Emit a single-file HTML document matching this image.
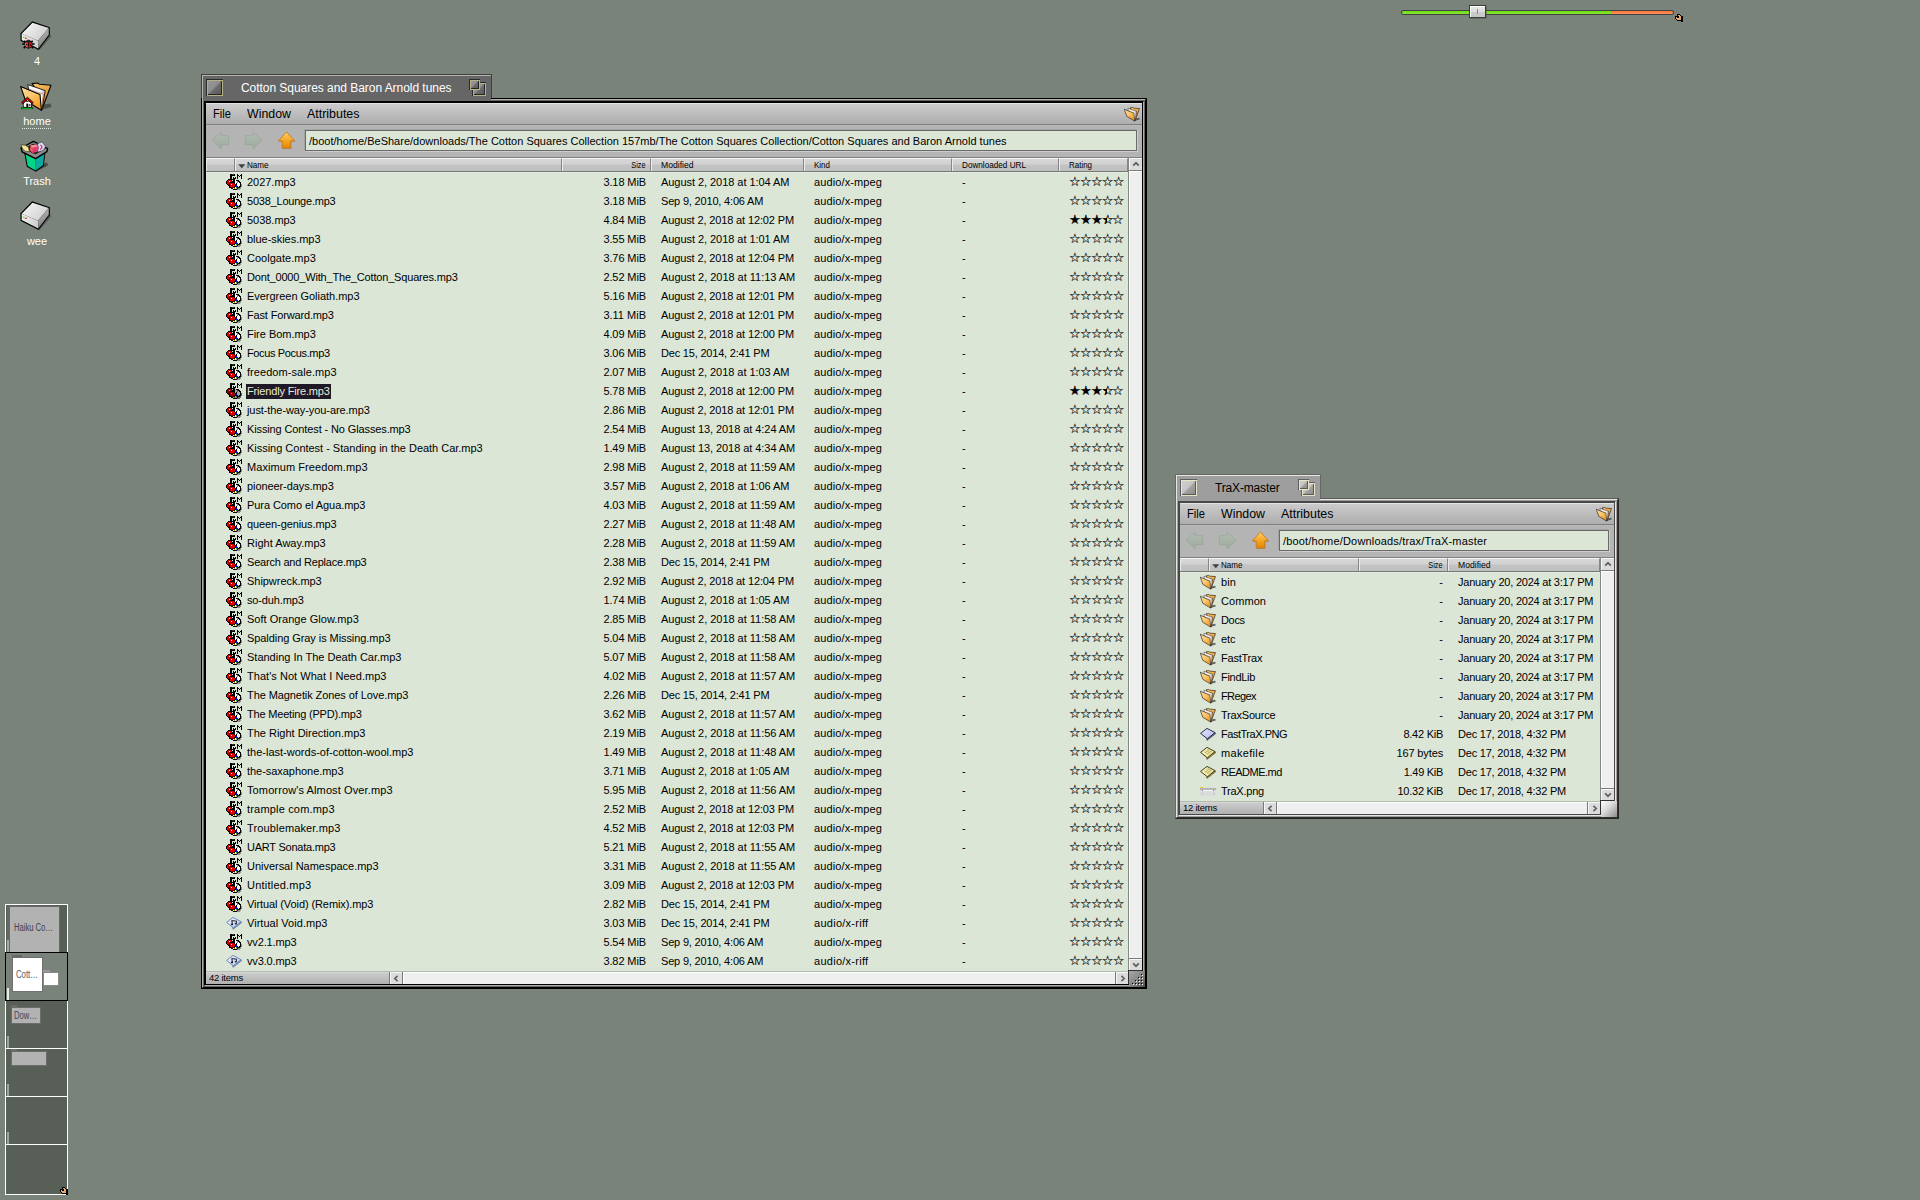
<!DOCTYPE html>
<html lang="en"><head><meta charset="utf-8"><title>Haiku Desktop</title>
<style>
html,body{margin:0;padding:0}
body{width:1920px;height:1200px;overflow:hidden;background:#79837a;position:relative;font-family:"Liberation Sans",sans-serif;font-size:11px;color:#000;line-height:1}
div,span,svg,i{position:absolute;box-sizing:border-box}
span.f{position:static;white-space:pre}
.t{white-space:pre;line-height:13px;height:13px}
.lbl{color:#fff;font-size:11px;text-align:center;width:80px;white-space:pre;line-height:13px}
.ring{left:0;top:0;right:0;bottom:0;border:1px solid #000}
.mb{left:0;top:0;right:0;height:22px;background:linear-gradient(#cbcbcb,#aeaeae);border-top:1px solid #e3e3e3;border-bottom:1px solid #7e7e7e}
.mi{font-size:12px;top:3px;line-height:14px;white-space:pre}
.nav{left:0;top:22px;right:0;height:32px;background:#b4b4b4;border-top:1px solid #b9b9b9}
.tf{background:#dbe6d7;border:1px solid #6a6a6a;box-shadow:-1px -1px 0 #a4a4a4,1px 1px 0 #cdcdcd,-1px 1px 0 #b8b8b8,1px -1px 0 #b8b8b8}
.hdr{left:0;top:54px;height:15px;background:linear-gradient(#d8d8d8 0,#d2d2d2 46%,#c3c3c3 54%,#bfbfbf 100%);border-top:1px solid #808080;border-bottom:1px solid #787878}
.hc{top:0;height:13px;border-top:1px solid #f6f6f6;border-left:1px solid #ececec;border-right:1px solid #868686;font-size:9.5px;line-height:12px;white-space:pre}
.hc span.f{position:absolute;top:0}
.list{left:0;top:69px;background:#dbe6d7;border-top:1px solid #e5eddf}
.row{left:0;height:19px;right:0}
.row .t{top:3px}
.st{font-family:"DejaVu Sans",sans-serif;font-size:13px;line-height:13px;top:2px;white-space:pre;letter-spacing:-0.7px;-webkit-text-stroke:0.22px currentColor}
.sb{background:#efefef}
.btn{background:#dcdcdc;border-top:1px solid #f8f8f8;border-left:1px solid #f8f8f8}
.hand{width:8px;height:8px;overflow:hidden}.hand i{position:absolute;left:-1px;top:-1px;width:1px;height:1px;box-shadow:3px 1px #000,4px 1px #000,5px 1px #000,3px 2px #000,4px 2px #e8aa6c,5px 2px #e8aa6c,6px 2px #000,1px 3px #000,2px 3px #000,3px 3px #000,4px 3px #000,5px 3px #e8aa6c,6px 3px #e8aa6c,7px 3px #000,8px 3px #000,1px 4px #000,2px 4px #e8aa6c,3px 4px #000,4px 4px #000,5px 4px #e8aa6c,6px 4px #e8aa6c,7px 4px #000,8px 4px #000,1px 5px #000,2px 5px #e8aa6c,3px 5px #e8aa6c,4px 5px #e8aa6c,5px 5px #e8aa6c,6px 5px #e8aa6c,7px 5px #000,8px 5px #000,2px 6px #000,3px 6px #e8aa6c,4px 6px #e8aa6c,5px 6px #e8aa6c,6px 6px #e8aa6c,7px 6px #000,8px 6px #000,3px 7px #000,4px 7px #000,5px 7px #000,6px 7px #000,7px 7px #000,8px 7px #000,7px 8px #000,8px 8px #000}.mp3{width:16px;height:16px;overflow:hidden}.mp3 i{position:absolute;left:-1px;top:-1px;width:1px;height:1px;box-shadow:5px 1px #000,6px 1px #000,7px 1px #3a3a3a,8px 1px #3a3a3a,9px 1px #000,12px 1px #000,16px 1px #000,5px 2px #000,6px 2px #000,7px 2px #000,8px 2px #000,9px 2px #000,12px 2px #000,13px 2px #000,15px 2px #000,16px 2px #000,5px 3px #000,6px 3px #000,12px 3px #000,14px 3px #000,16px 3px #000,5px 4px #000,6px 4px #000,8px 4px #000,10px 4px #000,12px 4px #000,16px 4px #000,5px 5px #000,6px 5px #000,8px 5px #000,9px 5px #000,10px 5px #000,12px 5px #000,16px 5px #000,3px 6px #000,4px 6px #000,5px 6px #000,6px 6px #000,7px 6px #000,8px 6px #000,9px 6px #000,2px 7px #000,3px 7px #dc0000,4px 7px #dc0000,5px 7px #dc0000,6px 7px #000,7px 7px #fff,8px 7px #000,9px 7px #000,10px 7px #fff,11px 7px #000,12px 7px #000,13px 7px #000,1px 8px #000,2px 8px #dc0000,3px 8px #dc0000,4px 8px #fff,5px 8px #dc0000,6px 8px #dc0000,7px 8px #000,8px 8px #000,9px 8px #000,10px 8px #fff,11px 8px #fff,12px 8px #e040e8,13px 8px #000,14px 8px #000,1px 9px #000,2px 9px #dc0000,3px 9px #dc0000,4px 9px #dc0000,5px 9px #000,6px 9px #000,7px 9px #000,8px 9px #000,9px 9px #000,10px 9px #fff,11px 9px #e8e8e8,12px 9px #e040e8,13px 9px #fff,14px 9px #000,15px 9px #000,1px 10px #000,2px 10px #dc0000,3px 10px #dc0000,4px 10px #000,5px 10px #dc0000,6px 10px #dc0000,7px 10px #dc0000,8px 10px #dc0000,9px 10px #000,10px 10px #fff,11px 10px #000,12px 10px #fff,13px 10px #fff,14px 10px #fff,15px 10px #000,2px 11px #000,3px 11px #8c0000,4px 11px #000,5px 11px #dc0000,6px 11px #fff,7px 11px #dc0000,8px 11px #dc0000,9px 11px #dc0000,10px 11px #000,11px 11px #000,12px 11px #fff,13px 11px #fff,14px 11px #fff,15px 11px #000,16px 11px #8a9088,3px 12px #000,4px 12px #000,5px 12px #dc0000,6px 12px #dc0000,7px 12px #dc0000,8px 12px #dc0000,9px 12px #dc0000,10px 12px #000,11px 12px #0000e0,12px 12px #fff,13px 12px #fff,14px 12px #fff,15px 12px #000,16px 12px #8a9088,4px 13px #000,5px 13px #dc0000,6px 13px #dc0000,7px 13px #dc0000,8px 13px #dc0000,9px 13px #8c0000,10px 13px #000,11px 13px #0000e0,12px 13px #0000e0,13px 13px #e8e8e8,14px 13px #000,15px 13px #000,16px 13px #8a9088,4px 14px #000,5px 14px #000,6px 14px #8c0000,7px 14px #8c0000,8px 14px #8c0000,9px 14px #000,10px 14px #fff,11px 14px #00c000,12px 14px #0000e0,13px 14px #000,14px 14px #000,15px 14px #8a9088,6px 15px #000,7px 15px #000,8px 15px #fff,9px 15px #b0a000,10px 15px #fff,11px 15px #c080c8,12px 15px #000,13px 15px #8a9088,14px 15px #8a9088,15px 15px #8a9088,8px 16px #000,9px 16px #000,10px 16px #000,11px 16px #000,12px 16px #8a9088,13px 16px #8a9088,14px 16px #8a9088}.mp3s{width:16px;height:16px;overflow:hidden}.mp3s i{position:absolute;left:-1px;top:-1px;width:1px;height:1px;box-shadow:5px 1px #000,6px 1px #000,7px 1px #222,8px 1px #222,9px 1px #000,12px 1px #000,16px 1px #000,5px 2px #000,6px 2px #000,7px 2px #000,8px 2px #000,9px 2px #000,12px 2px #000,13px 2px #000,15px 2px #000,16px 2px #000,5px 3px #000,6px 3px #000,12px 3px #000,14px 3px #000,16px 3px #000,5px 4px #000,6px 4px #000,8px 4px #000,10px 4px #000,12px 4px #000,16px 4px #000,5px 5px #000,6px 5px #000,8px 5px #000,9px 5px #000,10px 5px #000,12px 5px #000,16px 5px #000,3px 6px #000,4px 6px #000,5px 6px #000,6px 6px #000,7px 6px #000,8px 6px #000,9px 6px #000,2px 7px #000,3px 7px #980000,4px 7px #980000,5px 7px #980000,6px 7px #000,7px 7px #a8a8a8,8px 7px #000,9px 7px #000,10px 7px #a8a8a8,11px 7px #000,12px 7px #000,13px 7px #000,1px 8px #000,2px 8px #980000,3px 8px #980000,4px 8px #a8a8a8,5px 8px #980000,6px 8px #980000,7px 8px #000,8px 8px #000,9px 8px #000,10px 8px #a8a8a8,11px 8px #a8a8a8,12px 8px #9030a0,13px 8px #000,14px 8px #000,1px 9px #000,2px 9px #980000,3px 9px #980000,4px 9px #980000,5px 9px #000,6px 9px #000,7px 9px #000,8px 9px #000,9px 9px #000,10px 9px #a8a8a8,11px 9px #989898,12px 9px #9030a0,13px 9px #a8a8a8,14px 9px #000,15px 9px #000,1px 10px #000,2px 10px #980000,3px 10px #980000,4px 10px #000,5px 10px #980000,6px 10px #980000,7px 10px #980000,8px 10px #980000,9px 10px #000,10px 10px #a8a8a8,11px 10px #000,12px 10px #a8a8a8,13px 10px #a8a8a8,14px 10px #a8a8a8,15px 10px #000,2px 11px #000,3px 11px #5c0000,4px 11px #000,5px 11px #980000,6px 11px #a8a8a8,7px 11px #980000,8px 11px #980000,9px 11px #980000,10px 11px #000,11px 11px #000,12px 11px #a8a8a8,13px 11px #a8a8a8,14px 11px #a8a8a8,15px 11px #000,16px 11px #5a5e58,3px 12px #000,4px 12px #000,5px 12px #980000,6px 12px #980000,7px 12px #980000,8px 12px #980000,9px 12px #980000,10px 12px #000,11px 12px #000098,12px 12px #a8a8a8,13px 12px #a8a8a8,14px 12px #a8a8a8,15px 12px #000,16px 12px #5a5e58,4px 13px #000,5px 13px #980000,6px 13px #980000,7px 13px #980000,8px 13px #980000,9px 13px #5c0000,10px 13px #000,11px 13px #000098,12px 13px #000098,13px 13px #989898,14px 13px #000,15px 13px #000,16px 13px #5a5e58,4px 14px #000,5px 14px #000,6px 14px #5c0000,7px 14px #5c0000,8px 14px #5c0000,9px 14px #000,10px 14px #a8a8a8,11px 14px #008000,12px 14px #000098,13px 14px #000,14px 14px #000,15px 14px #5a5e58,6px 15px #000,7px 15px #000,8px 15px #a8a8a8,9px 15px #756a00,10px 15px #a8a8a8,11px 15px #805088,12px 15px #000,13px 15px #5a5e58,14px 15px #5a5e58,15px 15px #5a5e58,8px 16px #000,9px 16px #000,10px 16px #000,11px 16px #000,12px 16px #5a5e58,13px 16px #5a5e58,14px 16px #5a5e58}</style></head>
<body>
<svg width="0" height="0" style="left:-10px;top:-10px">
<linearGradient id="gFr" x1="0" y1="0" x2="0.6" y2="1"><stop offset="0" stop-color="#fddfa0"/><stop offset="0.5" stop-color="#fbc870"/><stop offset="1" stop-color="#f39a20"/></linearGradient>
<linearGradient id="gBk" x1="0" y1="0" x2="0.3" y2="1"><stop offset="0" stop-color="#fbc768"/><stop offset="1" stop-color="#d87818"/></linearGradient>
<linearGradient id="gPp" x1="0" y1="0" x2="1" y2="0.4"><stop offset="0" stop-color="#fff"/><stop offset="0.7" stop-color="#f4f4f4"/><stop offset="1" stop-color="#b8b8c0"/></linearGradient>
<linearGradient id="gTop" x1="0" y1="0" x2="1" y2="0.6"><stop offset="0" stop-color="#fafafa"/><stop offset="1" stop-color="#cfcfcf"/></linearGradient>
<linearGradient id="gFrt" x1="0" y1="0" x2="1" y2="0.3"><stop offset="0" stop-color="#f4f4f4"/><stop offset="1" stop-color="#d0d0d0"/></linearGradient>
<linearGradient id="gSd" x1="0" y1="0" x2="0.3" y2="1"><stop offset="0" stop-color="#c4c4c4"/><stop offset="1" stop-color="#7c7c7c"/></linearGradient>
<linearGradient id="gUp" x1="0" y1="0" x2="0" y2="1"><stop offset="0" stop-color="#fdd070"/><stop offset="0.5" stop-color="#f6a828"/><stop offset="1" stop-color="#e08800"/></linearGradient>
<linearGradient id="gArr" x1="0" y1="0" x2="0" y2="1"><stop offset="0" stop-color="#b2beb2"/><stop offset="1" stop-color="#9eaa9e"/></linearGradient>
<linearGradient id="gCan" x1="0" y1="0" x2="1" y2="0"><stop offset="0" stop-color="#00d888"/><stop offset="0.5" stop-color="#00d080"/><stop offset="0.52" stop-color="#10b0a0"/><stop offset="1" stop-color="#0a9c98"/></linearGradient>
<linearGradient id="gBlu" x1="0" y1="0" x2="1" y2="1"><stop offset="0" stop-color="#e8e8ff"/><stop offset="1" stop-color="#b4b4ee"/></linearGradient>
<linearGradient id="gYel" x1="0" y1="0" x2="1" y2="1"><stop offset="0" stop-color="#fdf8c0"/><stop offset="1" stop-color="#f0e48c"/></linearGradient>
<linearGradient id="gAud" x1="0" y1="0" x2="1" y2="1"><stop offset="0" stop-color="#f0f4ff"/><stop offset="1" stop-color="#b8c8f0"/></linearGradient>
</svg>
<svg style="left:20px;top:20px" width="32" height="32" viewBox="0 0 32 32"><path d="M19 30.6 L31.4 16.6 L29.8 14 L18 28 Z" fill="#3c423c" opacity="0.55"/> <path d="M12.2 1.2 L29.8 7.2 L29.9 15.1 L18.6 30.1 L0.5 20.7 L0.5 13.2 Z" fill="#000"/> <path d="M12.5 2.7 L28.7 8.1 L18 20.8 L1.7 13.7 Z" fill="url(#gTop)"/> <path d="M1.7 13.7 L18 20.8 L18.3 28.6 L1.7 20 Z" fill="url(#gFrt)"/> <path d="M18 20.8 L28.7 8.1 L28.8 14.7 L18.3 28.6 Z" fill="url(#gSd)"/> <ellipse cx="3.7" cy="17.3" rx="1.1" ry="0.8" fill="#60e020"/> <ellipse cx="5.9" cy="18.3" rx="1.1" ry="0.8" fill="#f03030"/></svg><svg style="left:21.6px;top:39.2px" width="13.4" height="10" viewBox="0 0 14 10"><path d="M0.2 5 H13.2 M1.8 9.4 L4.4 6.6 M11.6 9.4 L9 6.6 M2.2 1.6 L4.2 3.6 M11.2 1.6 L9.2 3.6" stroke="#000" stroke-width="1.7" fill="none"/> <path d="M3.6 2 Q6.7 -1.2 9.8 2 L9.4 3.4 H4 Z" fill="#2c2c2c"/> <path d="M3 3 H6.5 V9.6 Q3.2 9 2.9 5.6 Z" fill="#f24a52" stroke="#000" stroke-width="0.7"/> <path d="M7 3 H10.4 L10.6 5.6 Q10.2 9 7 9.6 Z" fill="#f01a1a" stroke="#000" stroke-width="0.7"/> <circle cx="4.8" cy="5.6" r="0.75" fill="#000"/><circle cx="8.8" cy="6" r="0.75" fill="#000"/> <path d="M3.8 4 V7" stroke="#f8a0a4" stroke-width="0.6"/></svg><div class="lbl" style="left:-3px;top:55px">4</div><svg style="left:20px;top:80px" width="32" height="32" viewBox="0 0 32 32"><path d="M22.5 29.5 L31.5 27 L30.5 23.5 L24 24.5 Z" fill="#3c423c" opacity="0.75"/> <path d="M12 3.6 L17.5 3 L19.5 4.2 L31 5.2 L21.6 30.2 L20 14.5 Z" fill="url(#gBk)" stroke="#000" stroke-width="1.1" stroke-linejoin="round"/> <path d="M7.8 4.6 L25.2 10.6 L22.2 28.5 L9 12 Z" fill="url(#gPp)" stroke="#111" stroke-width="0.9" stroke-linejoin="round"/> <path d="M9.2 9.2 L23.2 14.2 L21.6 28.6 L10 14 Z" fill="#fff" stroke="#a04010" stroke-width="0.5"/> <path d="M0.6 6.4 L20 14.6 L21.4 30.2 L5.5 20.5 Z" fill="url(#gFr)" stroke="#000" stroke-width="1.1" stroke-linejoin="round"/></svg><svg style="left:20.6px;top:96.4px" width="13.4" height="13.4" viewBox="0 0 14 14"><path d="M0.4 11.9 H12.6 V13.7 H0.4 Z" fill="#000"/> <path d="M1.1 12.2 H11.9 V13.3 H1.1 Z" fill="#00f028"/> <path d="M2 6 H11.4 V12 H2 Z" fill="#000"/> <path d="M2.8 6 H10.6 V11.3 H2.8 Z" fill="#fff"/> <path d="M6.7 1.2 L12.8 6.9 L11.6 8.2 L6.7 3.7 L1.8 8.2 L0.6 6.9 Z" fill="#f00000" stroke="#000" stroke-width="0.9" stroke-linejoin="round"/> <path d="M5.6 8 H7.6 V11.4 H5.6 Z" fill="#000"/> <circle cx="9.1" cy="9.3" r="1" fill="#222"/><circle cx="9.3" cy="9.1" r="0.4" fill="#ddd"/></svg><div class="lbl" style="left:-3px;top:115px">home</div><div style="left:22px;top:128px;width:29px;height:1px;background:repeating-linear-gradient(to right,#e4e8e4 0 1px,transparent 1px 2px)"></div><svg style="left:20px;top:140px" width="32" height="32" viewBox="0 0 32 32"><path d="M16 31.6 L28 25.6 L27 22.6 L21 24.4 Z" fill="#363c36" opacity="0.8"/> <path d="M4.2 12.6 L25.4 12.2 L23.8 25.9 L15.7 31.8 L6.8 26.7 Z" fill="#000"/> <path d="M5.4 13.6 L15.6 18.6 L15.6 30.4 L7.7 26 Z" fill="#00d686"/> <path d="M15.6 18.6 L24.4 13.2 L22.9 25.3 L15.6 30.4 Z" fill="#0ea89e"/> <path d="M1 8 L13.5 1.4 L27.6 8.6 L26.9 11.7 L15.6 18.7 L2.3 12 Z" fill="#8e8e8e" stroke="#000" stroke-width="1.4" stroke-linejoin="round"/> <path d="M3.5 8.6 L13.5 3.6 L25 9 L15.4 14.6 Z" fill="#262626"/> <path d="M0.8 4.8 L5.6 5.2 L8.6 7.6 L9.4 11.8 L5.6 11.4 L2.6 8.8 Z" fill="#f4e690" stroke="#222" stroke-width="0.6"/> <path d="M17.6 3.6 L22 1.8 L25.6 6.4 L23.4 10.4 L17.6 12.2 Z" fill="#d4dcf8" stroke="#222" stroke-width="0.6"/> <path d="M20.4 5 Q23.6 6.6 20.2 9.6" fill="none" stroke="#e02860" stroke-width="1.3"/> <path d="M10.2 5.6 L15.8 4.4 L18.4 6.6 L17.6 11.4 L12.4 13 L9.4 10.4 Z" fill="#e85a68" stroke="#300" stroke-width="0.5"/> <path d="M10.2 5.6 L15.8 4.4 L18.4 6.6 L12.8 7.8 Z" fill="#f89098"/> <path d="M18.4 6.6 L17.6 11.4 L12.4 13 L12.8 7.8 Z" fill="#e03a70"/></svg><div class="lbl" style="left:-3px;top:175px">Trash</div><svg style="left:20px;top:200px" width="32" height="32" viewBox="0 0 32 32"><path d="M19 30.6 L31.4 16.6 L29.8 14 L18 28 Z" fill="#3c423c" opacity="0.55"/> <path d="M12.2 1.2 L29.8 7.2 L29.9 15.1 L18.6 30.1 L0.5 20.7 L0.5 13.2 Z" fill="#000"/> <path d="M12.5 2.7 L28.7 8.1 L18 20.8 L1.7 13.7 Z" fill="url(#gTop)"/> <path d="M1.7 13.7 L18 20.8 L18.3 28.6 L1.7 20 Z" fill="url(#gFrt)"/> <path d="M18 20.8 L28.7 8.1 L28.8 14.7 L18.3 28.6 Z" fill="url(#gSd)"/> <ellipse cx="3.7" cy="17.3" rx="1.1" ry="0.8" fill="#60e020"/> <ellipse cx="5.9" cy="18.3" rx="1.1" ry="0.8" fill="#f03030"/></svg><div class="lbl" style="left:-3px;top:235px">wee</div><div style="left:1401px;top:10px;width:273px;height:5px;background:#3e4446;border-radius:2.5px"></div><div style="left:1402px;top:11px;width:209px;height:3px;background:linear-gradient(#72dc12,#84e62c);border-radius:1.5px 0 0 1.5px"></div><div style="left:1611px;top:11px;width:62px;height:3px;background:linear-gradient(#f8743a,#fe9258);border-radius:0 1.5px 1.5px 0"></div><div style="left:1470px;top:6px;width:17px;height:13px;background:#4a5048;opacity:.45"></div><div style="left:1469px;top:5px;width:17px;height:13px;background:linear-gradient(#e6e6e6 0,#dedede 50%,#cccccc 52%,#c8c8c8 100%);border:1px solid #3c3c3c;box-shadow:inset 1px 1px 0 #fff"><div style="left:7px;top:3px;width:1px;height:5px;background:#8a8a8a"></div></div><div class="hand" style="left:1675px;top:14px"><i></i></div><div style="left:5px;top:904px;width:63px;height:291px;background:#fff"></div><div style="left:6px;top:905px;width:61px;height:47px;background:#575f57;overflow:hidden"><div style="left:1px;top:0;width:3px;height:36px;background:#666"></div><div style="left:1px;top:35px;width:2px;height:12px;background:#a8a8a8"></div><div style="left:3px;top:1px;width:51px;height:47px;background:#b2b2b2;border:1px solid #6a6a6a"></div><div style="left:5px;top:0px;width:7px;height:2px;background:#666"></div><div class="t" style="left:8px;top:16px;font-size:10px;color:#3c4050"><span class="f" style="display:inline-block;transform:scaleX(0.7626);transform-origin:0 0">Haiku Co…</span></div></div><div style="left:6px;top:953px;width:61px;height:47px;background:#79837a;overflow:hidden"><div style="left:1px;top:35px;width:2px;height:12px;background:#e8e8e8"></div><div style="left:6px;top:2px;width:10px;height:3px;background:#666"></div><div style="left:6px;top:4px;width:31px;height:35px;background:#fff;border:1px solid #707070"></div><div class="t" style="left:10px;top:15px;font-size:10px;color:#505868"><span class="f" style="display:inline-block;transform:scaleX(0.7762);transform-origin:0 0">Cott…</span></div><div style="left:37px;top:17px;width:7px;height:3px;background:#999"></div><div style="left:37px;top:19px;width:16px;height:14px;background:#fff;border:1px solid #8a8a8a"></div></div><div style="left:5px;top:952px;width:63px;height:49px;border:1px solid #000"></div><div style="left:6px;top:1001px;width:61px;height:47px;background:#575f57;overflow:hidden"><div style="left:1px;top:35px;width:2px;height:12px;background:#a0a4a0"></div><div style="left:5px;top:4px;width:6px;height:3px;background:#6c6c6c"></div><div style="left:5px;top:6px;width:30px;height:17px;background:#b2b2b2;border:1px solid #6a6e6a"></div><div class="t" style="left:8px;top:8px;font-size:10px;color:#404458"><span class="f" style="display:inline-block;transform:scaleX(0.7663);transform-origin:0 0">Dow…</span></div></div><div style="left:6px;top:1049px;width:61px;height:47px;background:#575f57;overflow:hidden"><div style="left:1px;top:35px;width:2px;height:12px;background:#a0a4a0"></div><div style="left:5px;top:0px;width:6px;height:3px;background:#6c6c6c"></div><div style="left:5px;top:2px;width:36px;height:15px;background:#b2b2b2;border:1px solid #6a6e6a"></div></div><div style="left:6px;top:1097px;width:61px;height:47px;background:#575f57;overflow:hidden"><div style="left:1px;top:35px;width:2px;height:12px;background:#a0a4a0"></div></div><div style="left:6px;top:1145px;width:61px;height:49px;background:#575f57;overflow:hidden"></div><div class="hand" style="left:60px;top:1187px"><i></i></div>
<div style="left:201px;top:74px;width:291px;height:25px;background:#666;border-top:1px solid #404040;border-left:1px solid #404040;border-right:1px solid #404040"><div style="left:0;top:0;right:0;height:1px;background:#b4b4b4"></div><div style="left:0;top:0;width:1px;bottom:0;background:#b4b4b4"></div></div><div style="left:206px;top:79px;width:17px;height:17px;background:#2a2a2a"></div><div style="left:207px;top:80px;width:16px;height:16px;background:#b6b286"></div><div style="left:208px;top:81px;width:14px;height:14px;background:#262626"></div><div style="left:208px;top:81px;width:13px;height:13px;background:linear-gradient(135deg,#989898 0,#8e8e8e 46%,#868686 50%,#6c6c6c 56%,#5a5a5a 100%)"></div><div style="left:472px;top:82px;width:14px;height:14px;background:#2a2a2a"></div><div style="left:473px;top:83px;width:13px;height:13px;background:#b6b286"></div><div style="left:474px;top:84px;width:11px;height:11px;background:#262626"></div><div style="left:474px;top:84px;width:10px;height:10px;background:linear-gradient(135deg,#989898 0,#8e8e8e 46%,#868686 50%,#6c6c6c 56%,#5a5a5a 100%)"></div><div style="left:469px;top:79px;width:11px;height:11px;background:#2a2a2a"></div><div style="left:470px;top:80px;width:10px;height:10px;background:#b6b286"></div><div style="left:471px;top:81px;width:8px;height:8px;background:#262626"></div><div style="left:471px;top:81px;width:7px;height:7px;background:linear-gradient(135deg,#989898 0,#8e8e8e 46%,#868686 50%,#6c6c6c 56%,#5a5a5a 100%)"></div><div class="t" style="left:241px;top:81px;font-size:12px;line-height:15px;height:15px;color:#fff"><span class="f" style="letter-spacing:-0.045px">Cotton Squares and Baron Arnold tunes</span></div><div style="left:201px;top:98px;width:946px;height:891px"><div class="ring" style="border-color:#000 #000 #000 #000"><div class="ring" style="border-color:#b0b0b0 #000 #000 #b0b0b0"><div class="ring" style="border-color:#666 #666 #666 #666"><div class="ring" style="border-color:#000 #b0b0b0 #b0b0b0 #000"><div class="ring" style="border-color:#000 #000 #000 #000"><div style="left:0;top:0;right:0;bottom:0;background:#b4b4b4;overflow:hidden"><div class="mb"><div class="mi" style="left:7px"><span class="f" style="display:inline-block;transform:scaleX(0.9254);transform-origin:0 0">File</span></div><div class="mi" style="left:41px"><span class="f" style="display:inline-block;transform:scaleX(1.0307);transform-origin:0 0">Window</span></div><div class="mi" style="left:101px"><span class="f" style="display:inline-block;transform:scaleX(1.0354);transform-origin:0 0">Attributes</span></div><svg style="left:918px;top:1.5px" width="16" height="16" viewBox="0 0 32 32"><path d="M22.5 29.5 L31.5 27 L30.5 23.5 L24 24.5 Z" fill="#3c423c" opacity="0.75"/> <path d="M12 3.6 L17.5 3 L19.5 4.2 L31 5.2 L21.6 30.2 L20 14.5 Z" fill="url(#gBk)" stroke="#000" stroke-width="1.1" stroke-linejoin="round"/> <path d="M7.8 4.6 L25.2 10.6 L22.2 28.5 L9 12 Z" fill="url(#gPp)" stroke="#111" stroke-width="0.9" stroke-linejoin="round"/> <path d="M9.2 9.2 L23.2 14.2 L21.6 28.6 L10 14 Z" fill="#fff" stroke="#a04010" stroke-width="0.5"/> <path d="M0.6 6.4 L20 14.6 L21.4 30.2 L5.5 20.5 Z" fill="url(#gFr)" stroke="#000" stroke-width="1.1" stroke-linejoin="round"/></svg></div><div class="nav"><svg style="left:5px;top:4.3px" width="20" height="20" viewBox="0 0 20 20"><path d="M1.3 10.3 L10.3 2.3 V6 H18 V15 H10.3 V19 Z" fill="#8a9688" opacity="0.55"/> <path d="M1 10 L10 2 V5.7 H17.7 V14.7 H10 V18.7 Z" fill="url(#gArr)" stroke="#9ca89c" stroke-width="0.8" stroke-linejoin="round"/></svg><svg style="left:37.3px;top:4.3px" width="20" height="20" viewBox="0 0 20 20"><path d="M19.3 10.3 L10.3 2.3 V6 H2.6 V15 H10.3 V19 Z" fill="#8a9688" opacity="0.55"/> <path d="M19 10 L10 2 V5.7 H2.3 V14.7 H10 V18.7 Z" fill="url(#gArr)" stroke="#9ca89c" stroke-width="0.8" stroke-linejoin="round"/></svg><svg style="left:71px;top:4.8px" width="19" height="19" viewBox="0 0 20 20"><path d="M10.4 1.6 L19 11 H14.9 V18.6 H5.9 V11 H1.8 Z" fill="#6a5a3a" opacity="0.5"/> <path d="M10 1 L18.6 10.4 H14.5 V18 H5.5 V10.4 H1.4 Z" fill="url(#gUp)" stroke="#d07818" stroke-width="0.9" stroke-linejoin="round"/></svg><div class="tf" style="left:99px;top:4px;width:832px;height:21px"><div class="t" style="left:3px;top:4px"><span class="f" style="letter-spacing:0.008px">/boot/home/BeShare/downloads/The Cotton Squares Collection 157mb/The Cotton Squares Collection/Cotton Squares and Baron Arnold tunes</span></div></div></div><div class="hdr" style="width:923px"><div class="hc" style="left:0px;width:29px"></div><div class="hc" style="left:29px;width:327px"><svg style="left:2px;top:5px" width="8" height="5"><path d="M0.3 0.3 H7.3 L3.8 4.2 Z" fill="#404040"/></svg><span class="f" style="left:11px;transform:scaleX(0.8483);transform-origin:0 0">Name</span></div><div class="hc" style="left:356px;width:89px"><span class="f" style="right:5px;transform:scaleX(0.7682);transform-origin:100% 0">Size</span></div><div class="hc" style="left:445px;width:153px"><span class="f" style="left:9px;transform:scaleX(0.9047);transform-origin:0 0">Modified</span></div><div class="hc" style="left:598px;width:148px"><span class="f" style="left:9px;transform:scaleX(0.8414);transform-origin:0 0">Kind</span></div><div class="hc" style="left:746px;width:107px"><span class="f" style="left:9px;transform:scaleX(0.8594);transform-origin:0 0">Downloaded URL</span></div><div class="hc" style="left:853px;width:69px"><span class="f" style="left:9px;transform:scaleX(0.8373);transform-origin:0 0">Rating</span></div></div><div class="list" style="width:922px;height:799px"><div class="row" style="top:0px"><div class="mp3" style="left:20px;top:1px"><i></i></div><div class="t" style="left:41px"><span class="f" style="letter-spacing:-0.030px">2027.mp3</span></div><div class="t" style="right:482px"><span class="f" style="letter-spacing:-0.103px">3.18 MiB</span></div><div class="t" style="left:455px"><span class="f" style="letter-spacing:-0.050px">August 2, 2018 at 1:04 AM</span></div><div class="t" style="left:608px"><span class="f" style="letter-spacing:0.112px">audio/x-mpeg</span></div><div class="t" style="left:756px">-</div><div class="st" style="left:863px;color:#1a1a1a">☆☆☆☆☆</div></div><div class="row" style="top:19px"><div class="mp3" style="left:20px;top:1px"><i></i></div><div class="t" style="left:41px"><span class="f" style="letter-spacing:-0.217px">5038_Lounge.mp3</span></div><div class="t" style="right:482px"><span class="f" style="letter-spacing:-0.103px">3.18 MiB</span></div><div class="t" style="left:455px"><span class="f" style="letter-spacing:-0.181px">Sep 9, 2010, 4:06 AM</span></div><div class="t" style="left:608px"><span class="f" style="letter-spacing:0.112px">audio/x-mpeg</span></div><div class="t" style="left:756px">-</div><div class="st" style="left:863px;color:#1a1a1a">☆☆☆☆☆</div></div><div class="row" style="top:38px"><div class="mp3" style="left:20px;top:1px"><i></i></div><div class="t" style="left:41px"><span class="f" style="letter-spacing:-0.030px">5038.mp3</span></div><div class="t" style="right:482px"><span class="f" style="letter-spacing:-0.103px">4.84 MiB</span></div><div class="t" style="left:455px"><span class="f" style="letter-spacing:-0.130px">August 2, 2018 at 12:02 PM</span></div><div class="t" style="left:608px"><span class="f" style="letter-spacing:0.112px">audio/x-mpeg</span></div><div class="t" style="left:756px">-</div><div class="st" style="left:863px;color:#000">★★★<span class="f" style="position:relative;display:inline-block;letter-spacing:0;width:10.2px">☆<span style="left:0;top:0;width:5px;overflow:hidden;color:#000">★</span></span><span class="f" style="color:#222">☆</span></div></div><div class="row" style="top:57px"><div class="mp3" style="left:20px;top:1px"><i></i></div><div class="t" style="left:41px"><span class="f" style="letter-spacing:-0.035px">blue-skies.mp3</span></div><div class="t" style="right:482px"><span class="f" style="letter-spacing:-0.103px">3.55 MiB</span></div><div class="t" style="left:455px"><span class="f" style="letter-spacing:-0.050px">August 2, 2018 at 1:01 AM</span></div><div class="t" style="left:608px"><span class="f" style="letter-spacing:0.112px">audio/x-mpeg</span></div><div class="t" style="left:756px">-</div><div class="st" style="left:863px;color:#1a1a1a">☆☆☆☆☆</div></div><div class="row" style="top:76px"><div class="mp3" style="left:20px;top:1px"><i></i></div><div class="t" style="left:41px"><span class="f" style="letter-spacing:0.025px">Coolgate.mp3</span></div><div class="t" style="right:482px"><span class="f" style="letter-spacing:-0.103px">3.76 MiB</span></div><div class="t" style="left:455px"><span class="f" style="letter-spacing:-0.130px">August 2, 2018 at 12:04 PM</span></div><div class="t" style="left:608px"><span class="f" style="letter-spacing:0.112px">audio/x-mpeg</span></div><div class="t" style="left:756px">-</div><div class="st" style="left:863px;color:#1a1a1a">☆☆☆☆☆</div></div><div class="row" style="top:95px"><div class="mp3" style="left:20px;top:1px"><i></i></div><div class="t" style="left:41px"><span class="f" style="letter-spacing:-0.176px">Dont_0000_With_The_Cotton_Squares.mp3</span></div><div class="t" style="right:482px"><span class="f" style="letter-spacing:-0.103px">2.52 MiB</span></div><div class="t" style="left:455px"><span class="f" style="letter-spacing:-0.029px">August 2, 2018 at 11:13 AM</span></div><div class="t" style="left:608px"><span class="f" style="letter-spacing:0.112px">audio/x-mpeg</span></div><div class="t" style="left:756px">-</div><div class="st" style="left:863px;color:#1a1a1a">☆☆☆☆☆</div></div><div class="row" style="top:114px"><div class="mp3" style="left:20px;top:1px"><i></i></div><div class="t" style="left:41px"><span class="f" style="letter-spacing:-0.030px">Evergreen Goliath.mp3</span></div><div class="t" style="right:482px"><span class="f" style="letter-spacing:-0.103px">5.16 MiB</span></div><div class="t" style="left:455px"><span class="f" style="letter-spacing:-0.130px">August 2, 2018 at 12:01 PM</span></div><div class="t" style="left:608px"><span class="f" style="letter-spacing:0.112px">audio/x-mpeg</span></div><div class="t" style="left:756px">-</div><div class="st" style="left:863px;color:#1a1a1a">☆☆☆☆☆</div></div><div class="row" style="top:133px"><div class="mp3" style="left:20px;top:1px"><i></i></div><div class="t" style="left:41px"><span class="f" style="letter-spacing:-0.159px">Fast Forward.mp3</span></div><div class="t" style="right:482px"><span class="f" style="letter-spacing:0.001px">3.11 MiB</span></div><div class="t" style="left:455px"><span class="f" style="letter-spacing:-0.130px">August 2, 2018 at 12:01 PM</span></div><div class="t" style="left:608px"><span class="f" style="letter-spacing:0.112px">audio/x-mpeg</span></div><div class="t" style="left:756px">-</div><div class="st" style="left:863px;color:#1a1a1a">☆☆☆☆☆</div></div><div class="row" style="top:152px"><div class="mp3" style="left:20px;top:1px"><i></i></div><div class="t" style="left:41px"><span class="f" style="letter-spacing:-0.023px">Fire Bom.mp3</span></div><div class="t" style="right:482px"><span class="f" style="letter-spacing:-0.103px">4.09 MiB</span></div><div class="t" style="left:455px"><span class="f" style="letter-spacing:-0.130px">August 2, 2018 at 12:00 PM</span></div><div class="t" style="left:608px"><span class="f" style="letter-spacing:0.112px">audio/x-mpeg</span></div><div class="t" style="left:756px">-</div><div class="st" style="left:863px;color:#1a1a1a">☆☆☆☆☆</div></div><div class="row" style="top:171px"><div class="mp3" style="left:20px;top:1px"><i></i></div><div class="t" style="left:41px"><span class="f" style="letter-spacing:-0.356px">Focus Pocus.mp3</span></div><div class="t" style="right:482px"><span class="f" style="letter-spacing:-0.103px">3.06 MiB</span></div><div class="t" style="left:455px"><span class="f" style="letter-spacing:-0.196px">Dec 15, 2014, 2:41 PM</span></div><div class="t" style="left:608px"><span class="f" style="letter-spacing:0.112px">audio/x-mpeg</span></div><div class="t" style="left:756px">-</div><div class="st" style="left:863px;color:#1a1a1a">☆☆☆☆☆</div></div><div class="row" style="top:190px"><div class="mp3" style="left:20px;top:1px"><i></i></div><div class="t" style="left:41px"><span class="f" style="letter-spacing:0.059px">freedom-sale.mp3</span></div><div class="t" style="right:482px"><span class="f" style="letter-spacing:-0.103px">2.07 MiB</span></div><div class="t" style="left:455px"><span class="f" style="letter-spacing:-0.050px">August 2, 2018 at 1:03 AM</span></div><div class="t" style="left:608px"><span class="f" style="letter-spacing:0.112px">audio/x-mpeg</span></div><div class="t" style="left:756px">-</div><div class="st" style="left:863px;color:#1a1a1a">☆☆☆☆☆</div></div><div class="row" style="top:209px"><div class="mp3s" style="left:20px;top:1px"><i></i></div><div style="left:40px;top:11px;width:85px;height:15px;background:#1e1827;top:2px"></div><div class="t" style="left:41px;color:#e8ecd8"><span class="f" style="letter-spacing:-0.169px">Friendly Fire.mp3</span></div><div class="t" style="right:482px"><span class="f" style="letter-spacing:-0.103px">5.78 MiB</span></div><div class="t" style="left:455px"><span class="f" style="letter-spacing:-0.130px">August 2, 2018 at 12:00 PM</span></div><div class="t" style="left:608px"><span class="f" style="letter-spacing:0.112px">audio/x-mpeg</span></div><div class="t" style="left:756px">-</div><div class="st" style="left:863px;color:#000">★★★<span class="f" style="position:relative;display:inline-block;letter-spacing:0;width:10.2px">☆<span style="left:0;top:0;width:5px;overflow:hidden;color:#000">★</span></span><span class="f" style="color:#222">☆</span></div></div><div class="row" style="top:228px"><div class="mp3" style="left:20px;top:1px"><i></i></div><div class="t" style="left:41px"><span class="f" style="letter-spacing:-0.084px">just-the-way-you-are.mp3</span></div><div class="t" style="right:482px"><span class="f" style="letter-spacing:-0.103px">2.86 MiB</span></div><div class="t" style="left:455px"><span class="f" style="letter-spacing:-0.130px">August 2, 2018 at 12:01 PM</span></div><div class="t" style="left:608px"><span class="f" style="letter-spacing:0.112px">audio/x-mpeg</span></div><div class="t" style="left:756px">-</div><div class="st" style="left:863px;color:#1a1a1a">☆☆☆☆☆</div></div><div class="row" style="top:247px"><div class="mp3" style="left:20px;top:1px"><i></i></div><div class="t" style="left:41px"><span class="f" style="letter-spacing:-0.122px">Kissing Contest - No Glasses.mp3</span></div><div class="t" style="right:482px"><span class="f" style="letter-spacing:-0.103px">2.54 MiB</span></div><div class="t" style="left:455px"><span class="f" style="letter-spacing:-0.060px">August 13, 2018 at 4:24 AM</span></div><div class="t" style="left:608px"><span class="f" style="letter-spacing:0.112px">audio/x-mpeg</span></div><div class="t" style="left:756px">-</div><div class="st" style="left:863px;color:#1a1a1a">☆☆☆☆☆</div></div><div class="row" style="top:266px"><div class="mp3" style="left:20px;top:1px"><i></i></div><div class="t" style="left:41px"><span class="f" style="letter-spacing:-0.020px">Kissing Contest - Standing in the Death Car.mp3</span></div><div class="t" style="right:482px"><span class="f" style="letter-spacing:-0.103px">1.49 MiB</span></div><div class="t" style="left:455px"><span class="f" style="letter-spacing:-0.060px">August 13, 2018 at 4:34 AM</span></div><div class="t" style="left:608px"><span class="f" style="letter-spacing:0.112px">audio/x-mpeg</span></div><div class="t" style="left:756px">-</div><div class="st" style="left:863px;color:#1a1a1a">☆☆☆☆☆</div></div><div class="row" style="top:285px"><div class="mp3" style="left:20px;top:1px"><i></i></div><div class="t" style="left:41px"><span class="f" style="letter-spacing:0.074px">Maximum Freedom.mp3</span></div><div class="t" style="right:482px"><span class="f" style="letter-spacing:-0.103px">2.98 MiB</span></div><div class="t" style="left:455px"><span class="f" style="letter-spacing:-0.029px">August 2, 2018 at 11:59 AM</span></div><div class="t" style="left:608px"><span class="f" style="letter-spacing:0.112px">audio/x-mpeg</span></div><div class="t" style="left:756px">-</div><div class="st" style="left:863px;color:#1a1a1a">☆☆☆☆☆</div></div><div class="row" style="top:304px"><div class="mp3" style="left:20px;top:1px"><i></i></div><div class="t" style="left:41px"><span class="f" style="letter-spacing:-0.085px">pioneer-days.mp3</span></div><div class="t" style="right:482px"><span class="f" style="letter-spacing:-0.103px">3.57 MiB</span></div><div class="t" style="left:455px"><span class="f" style="letter-spacing:-0.050px">August 2, 2018 at 1:06 AM</span></div><div class="t" style="left:608px"><span class="f" style="letter-spacing:0.112px">audio/x-mpeg</span></div><div class="t" style="left:756px">-</div><div class="st" style="left:863px;color:#1a1a1a">☆☆☆☆☆</div></div><div class="row" style="top:323px"><div class="mp3" style="left:20px;top:1px"><i></i></div><div class="t" style="left:41px"><span class="f" style="letter-spacing:-0.069px">Pura Como el Agua.mp3</span></div><div class="t" style="right:482px"><span class="f" style="letter-spacing:-0.103px">4.03 MiB</span></div><div class="t" style="left:455px"><span class="f" style="letter-spacing:-0.029px">August 2, 2018 at 11:59 AM</span></div><div class="t" style="left:608px"><span class="f" style="letter-spacing:0.112px">audio/x-mpeg</span></div><div class="t" style="left:756px">-</div><div class="st" style="left:863px;color:#1a1a1a">☆☆☆☆☆</div></div><div class="row" style="top:342px"><div class="mp3" style="left:20px;top:1px"><i></i></div><div class="t" style="left:41px"><span class="f" style="letter-spacing:-0.095px">queen-genius.mp3</span></div><div class="t" style="right:482px"><span class="f" style="letter-spacing:-0.103px">2.27 MiB</span></div><div class="t" style="left:455px"><span class="f" style="letter-spacing:-0.029px">August 2, 2018 at 11:48 AM</span></div><div class="t" style="left:608px"><span class="f" style="letter-spacing:0.112px">audio/x-mpeg</span></div><div class="t" style="left:756px">-</div><div class="st" style="left:863px;color:#1a1a1a">☆☆☆☆☆</div></div><div class="row" style="top:361px"><div class="mp3" style="left:20px;top:1px"><i></i></div><div class="t" style="left:41px"><span class="f" style="letter-spacing:0.017px">Right Away.mp3</span></div><div class="t" style="right:482px"><span class="f" style="letter-spacing:-0.103px">2.28 MiB</span></div><div class="t" style="left:455px"><span class="f" style="letter-spacing:-0.029px">August 2, 2018 at 11:59 AM</span></div><div class="t" style="left:608px"><span class="f" style="letter-spacing:0.112px">audio/x-mpeg</span></div><div class="t" style="left:756px">-</div><div class="st" style="left:863px;color:#1a1a1a">☆☆☆☆☆</div></div><div class="row" style="top:380px"><div class="mp3" style="left:20px;top:1px"><i></i></div><div class="t" style="left:41px"><span class="f" style="letter-spacing:-0.211px">Search and Replace.mp3</span></div><div class="t" style="right:482px"><span class="f" style="letter-spacing:-0.103px">2.38 MiB</span></div><div class="t" style="left:455px"><span class="f" style="letter-spacing:-0.196px">Dec 15, 2014, 2:41 PM</span></div><div class="t" style="left:608px"><span class="f" style="letter-spacing:0.112px">audio/x-mpeg</span></div><div class="t" style="left:756px">-</div><div class="st" style="left:863px;color:#1a1a1a">☆☆☆☆☆</div></div><div class="row" style="top:399px"><div class="mp3" style="left:20px;top:1px"><i></i></div><div class="t" style="left:41px"><span class="f" style="letter-spacing:-0.039px">Shipwreck.mp3</span></div><div class="t" style="right:482px"><span class="f" style="letter-spacing:-0.103px">2.92 MiB</span></div><div class="t" style="left:455px"><span class="f" style="letter-spacing:-0.130px">August 2, 2018 at 12:04 PM</span></div><div class="t" style="left:608px"><span class="f" style="letter-spacing:0.112px">audio/x-mpeg</span></div><div class="t" style="left:756px">-</div><div class="st" style="left:863px;color:#1a1a1a">☆☆☆☆☆</div></div><div class="row" style="top:418px"><div class="mp3" style="left:20px;top:1px"><i></i></div><div class="t" style="left:41px"><span class="f" style="letter-spacing:-0.139px">so-duh.mp3</span></div><div class="t" style="right:482px"><span class="f" style="letter-spacing:-0.103px">1.74 MiB</span></div><div class="t" style="left:455px"><span class="f" style="letter-spacing:-0.050px">August 2, 2018 at 1:05 AM</span></div><div class="t" style="left:608px"><span class="f" style="letter-spacing:0.112px">audio/x-mpeg</span></div><div class="t" style="left:756px">-</div><div class="st" style="left:863px;color:#1a1a1a">☆☆☆☆☆</div></div><div class="row" style="top:437px"><div class="mp3" style="left:20px;top:1px"><i></i></div><div class="t" style="left:41px"><span class="f" style="letter-spacing:0.026px">Soft Orange Glow.mp3</span></div><div class="t" style="right:482px"><span class="f" style="letter-spacing:-0.103px">2.85 MiB</span></div><div class="t" style="left:455px"><span class="f" style="letter-spacing:-0.029px">August 2, 2018 at 11:58 AM</span></div><div class="t" style="left:608px"><span class="f" style="letter-spacing:0.112px">audio/x-mpeg</span></div><div class="t" style="left:756px">-</div><div class="st" style="left:863px;color:#1a1a1a">☆☆☆☆☆</div></div><div class="row" style="top:456px"><div class="mp3" style="left:20px;top:1px"><i></i></div><div class="t" style="left:41px"><span class="f" style="letter-spacing:-0.072px">Spalding Gray is Missing.mp3</span></div><div class="t" style="right:482px"><span class="f" style="letter-spacing:-0.103px">5.04 MiB</span></div><div class="t" style="left:455px"><span class="f" style="letter-spacing:-0.029px">August 2, 2018 at 11:58 AM</span></div><div class="t" style="left:608px"><span class="f" style="letter-spacing:0.112px">audio/x-mpeg</span></div><div class="t" style="left:756px">-</div><div class="st" style="left:863px;color:#1a1a1a">☆☆☆☆☆</div></div><div class="row" style="top:475px"><div class="mp3" style="left:20px;top:1px"><i></i></div><div class="t" style="left:41px"><span class="f" style="letter-spacing:-0.001px">Standing In The Death Car.mp3</span></div><div class="t" style="right:482px"><span class="f" style="letter-spacing:-0.103px">5.07 MiB</span></div><div class="t" style="left:455px"><span class="f" style="letter-spacing:-0.029px">August 2, 2018 at 11:58 AM</span></div><div class="t" style="left:608px"><span class="f" style="letter-spacing:0.112px">audio/x-mpeg</span></div><div class="t" style="left:756px">-</div><div class="st" style="left:863px;color:#1a1a1a">☆☆☆☆☆</div></div><div class="row" style="top:494px"><div class="mp3" style="left:20px;top:1px"><i></i></div><div class="t" style="left:41px"><span class="f" style="letter-spacing:0.041px">That's Not What I Need.mp3</span></div><div class="t" style="right:482px"><span class="f" style="letter-spacing:-0.103px">4.02 MiB</span></div><div class="t" style="left:455px"><span class="f" style="letter-spacing:-0.029px">August 2, 2018 at 11:57 AM</span></div><div class="t" style="left:608px"><span class="f" style="letter-spacing:0.112px">audio/x-mpeg</span></div><div class="t" style="left:756px">-</div><div class="st" style="left:863px;color:#1a1a1a">☆☆☆☆☆</div></div><div class="row" style="top:513px"><div class="mp3" style="left:20px;top:1px"><i></i></div><div class="t" style="left:41px"><span class="f" style="letter-spacing:-0.083px">The Magnetik Zones of Love.mp3</span></div><div class="t" style="right:482px"><span class="f" style="letter-spacing:-0.103px">2.26 MiB</span></div><div class="t" style="left:455px"><span class="f" style="letter-spacing:-0.196px">Dec 15, 2014, 2:41 PM</span></div><div class="t" style="left:608px"><span class="f" style="letter-spacing:0.112px">audio/x-mpeg</span></div><div class="t" style="left:756px">-</div><div class="st" style="left:863px;color:#1a1a1a">☆☆☆☆☆</div></div><div class="row" style="top:532px"><div class="mp3" style="left:20px;top:1px"><i></i></div><div class="t" style="left:41px"><span class="f" style="letter-spacing:-0.186px">The Meeting (PPD).mp3</span></div><div class="t" style="right:482px"><span class="f" style="letter-spacing:-0.103px">3.62 MiB</span></div><div class="t" style="left:455px"><span class="f" style="letter-spacing:-0.029px">August 2, 2018 at 11:57 AM</span></div><div class="t" style="left:608px"><span class="f" style="letter-spacing:0.112px">audio/x-mpeg</span></div><div class="t" style="left:756px">-</div><div class="st" style="left:863px;color:#1a1a1a">☆☆☆☆☆</div></div><div class="row" style="top:551px"><div class="mp3" style="left:20px;top:1px"><i></i></div><div class="t" style="left:41px"><span class="f" style="letter-spacing:-0.009px">The Right Direction.mp3</span></div><div class="t" style="right:482px"><span class="f" style="letter-spacing:-0.103px">2.19 MiB</span></div><div class="t" style="left:455px"><span class="f" style="letter-spacing:-0.029px">August 2, 2018 at 11:56 AM</span></div><div class="t" style="left:608px"><span class="f" style="letter-spacing:0.112px">audio/x-mpeg</span></div><div class="t" style="left:756px">-</div><div class="st" style="left:863px;color:#1a1a1a">☆☆☆☆☆</div></div><div class="row" style="top:570px"><div class="mp3" style="left:20px;top:1px"><i></i></div><div class="t" style="left:41px"><span class="f" style="letter-spacing:0.006px">the-last-words-of-cotton-wool.mp3</span></div><div class="t" style="right:482px"><span class="f" style="letter-spacing:-0.103px">1.49 MiB</span></div><div class="t" style="left:455px"><span class="f" style="letter-spacing:-0.029px">August 2, 2018 at 11:48 AM</span></div><div class="t" style="left:608px"><span class="f" style="letter-spacing:0.112px">audio/x-mpeg</span></div><div class="t" style="left:756px">-</div><div class="st" style="left:863px;color:#1a1a1a">☆☆☆☆☆</div></div><div class="row" style="top:589px"><div class="mp3" style="left:20px;top:1px"><i></i></div><div class="t" style="left:41px"><span class="f" style="letter-spacing:-0.043px">the-saxaphone.mp3</span></div><div class="t" style="right:482px"><span class="f" style="letter-spacing:-0.103px">3.71 MiB</span></div><div class="t" style="left:455px"><span class="f" style="letter-spacing:-0.050px">August 2, 2018 at 1:05 AM</span></div><div class="t" style="left:608px"><span class="f" style="letter-spacing:0.112px">audio/x-mpeg</span></div><div class="t" style="left:756px">-</div><div class="st" style="left:863px;color:#1a1a1a">☆☆☆☆☆</div></div><div class="row" style="top:608px"><div class="mp3" style="left:20px;top:1px"><i></i></div><div class="t" style="left:41px"><span class="f" style="letter-spacing:0.115px">Tomorrow's Almost Over.mp3</span></div><div class="t" style="right:482px"><span class="f" style="letter-spacing:-0.103px">5.95 MiB</span></div><div class="t" style="left:455px"><span class="f" style="letter-spacing:-0.029px">August 2, 2018 at 11:56 AM</span></div><div class="t" style="left:608px"><span class="f" style="letter-spacing:0.112px">audio/x-mpeg</span></div><div class="t" style="left:756px">-</div><div class="st" style="left:863px;color:#1a1a1a">☆☆☆☆☆</div></div><div class="row" style="top:627px"><div class="mp3" style="left:20px;top:1px"><i></i></div><div class="t" style="left:41px"><span class="f" style="letter-spacing:0.181px">trample com.mp3</span></div><div class="t" style="right:482px"><span class="f" style="letter-spacing:-0.103px">2.52 MiB</span></div><div class="t" style="left:455px"><span class="f" style="letter-spacing:-0.130px">August 2, 2018 at 12:03 PM</span></div><div class="t" style="left:608px"><span class="f" style="letter-spacing:0.112px">audio/x-mpeg</span></div><div class="t" style="left:756px">-</div><div class="st" style="left:863px;color:#1a1a1a">☆☆☆☆☆</div></div><div class="row" style="top:646px"><div class="mp3" style="left:20px;top:1px"><i></i></div><div class="t" style="left:41px"><span class="f" style="letter-spacing:0.143px">Troublemaker.mp3</span></div><div class="t" style="right:482px"><span class="f" style="letter-spacing:-0.103px">4.52 MiB</span></div><div class="t" style="left:455px"><span class="f" style="letter-spacing:-0.130px">August 2, 2018 at 12:03 PM</span></div><div class="t" style="left:608px"><span class="f" style="letter-spacing:0.112px">audio/x-mpeg</span></div><div class="t" style="left:756px">-</div><div class="st" style="left:863px;color:#1a1a1a">☆☆☆☆☆</div></div><div class="row" style="top:665px"><div class="mp3" style="left:20px;top:1px"><i></i></div><div class="t" style="left:41px"><span class="f" style="letter-spacing:-0.228px">UART Sonata.mp3</span></div><div class="t" style="right:482px"><span class="f" style="letter-spacing:-0.103px">5.21 MiB</span></div><div class="t" style="left:455px"><span class="f" style="letter-spacing:-0.029px">August 2, 2018 at 11:55 AM</span></div><div class="t" style="left:608px"><span class="f" style="letter-spacing:0.112px">audio/x-mpeg</span></div><div class="t" style="left:756px">-</div><div class="st" style="left:863px;color:#1a1a1a">☆☆☆☆☆</div></div><div class="row" style="top:684px"><div class="mp3" style="left:20px;top:1px"><i></i></div><div class="t" style="left:41px"><span class="f" style="letter-spacing:-0.024px">Universal Namespace.mp3</span></div><div class="t" style="right:482px"><span class="f" style="letter-spacing:-0.103px">3.31 MiB</span></div><div class="t" style="left:455px"><span class="f" style="letter-spacing:-0.029px">August 2, 2018 at 11:55 AM</span></div><div class="t" style="left:608px"><span class="f" style="letter-spacing:0.112px">audio/x-mpeg</span></div><div class="t" style="left:756px">-</div><div class="st" style="left:863px;color:#1a1a1a">☆☆☆☆☆</div></div><div class="row" style="top:703px"><div class="mp3" style="left:20px;top:1px"><i></i></div><div class="t" style="left:41px"><span class="f" style="letter-spacing:0.220px">Untitled.mp3</span></div><div class="t" style="right:482px"><span class="f" style="letter-spacing:-0.103px">3.09 MiB</span></div><div class="t" style="left:455px"><span class="f" style="letter-spacing:-0.130px">August 2, 2018 at 12:03 PM</span></div><div class="t" style="left:608px"><span class="f" style="letter-spacing:0.112px">audio/x-mpeg</span></div><div class="t" style="left:756px">-</div><div class="st" style="left:863px;color:#1a1a1a">☆☆☆☆☆</div></div><div class="row" style="top:722px"><div class="mp3" style="left:20px;top:1px"><i></i></div><div class="t" style="left:41px"><span class="f" style="letter-spacing:-0.092px">Virtual (Void) (Remix).mp3</span></div><div class="t" style="right:482px"><span class="f" style="letter-spacing:-0.103px">2.82 MiB</span></div><div class="t" style="left:455px"><span class="f" style="letter-spacing:-0.196px">Dec 15, 2014, 2:41 PM</span></div><div class="t" style="left:608px"><span class="f" style="letter-spacing:0.112px">audio/x-mpeg</span></div><div class="t" style="left:756px">-</div><div class="st" style="left:863px;color:#1a1a1a">☆☆☆☆☆</div></div><div class="row" style="top:741px"><svg style="left:20px;top:1px" width="16" height="16" viewBox="0 0 16 16"><path d="M7 14.4 L15.6 7.8 L15.2 6.6 L6.6 12.6 Z" fill="#8098d0" stroke="#567" stroke-width="0.5"/> <path d="M0.6 7.4 L7 2.4 L15 6.6 L7.4 12.8 Z" fill="url(#gAud)" stroke="#6080c0" stroke-width="0.9" stroke-linejoin="round"/> <path d="M5.6 5.6 L10.8 6.2 M5.8 5.6 L6.4 9.2 M10.6 6.2 L10.2 8.6" stroke="#222" stroke-width="1" fill="none"/> <ellipse cx="6" cy="9.4" rx="1.1" ry="0.8" fill="#111"/><ellipse cx="9.8" cy="8.8" rx="1.1" ry="0.8" fill="#111"/></svg><div class="t" style="left:41px"><span class="f" style="letter-spacing:0.037px">Virtual Void.mp3</span></div><div class="t" style="right:482px"><span class="f" style="letter-spacing:-0.103px">3.03 MiB</span></div><div class="t" style="left:455px"><span class="f" style="letter-spacing:-0.196px">Dec 15, 2014, 2:41 PM</span></div><div class="t" style="left:608px"><span class="f" style="letter-spacing:0.270px">audio/x-riff</span></div><div class="t" style="left:756px">-</div><div class="st" style="left:863px;color:#1a1a1a">☆☆☆☆☆</div></div><div class="row" style="top:760px"><div class="mp3" style="left:20px;top:1px"><i></i></div><div class="t" style="left:41px"><span class="f" style="letter-spacing:-0.139px">vv2.1.mp3</span></div><div class="t" style="right:482px"><span class="f" style="letter-spacing:-0.103px">5.54 MiB</span></div><div class="t" style="left:455px"><span class="f" style="letter-spacing:-0.181px">Sep 9, 2010, 4:06 AM</span></div><div class="t" style="left:608px"><span class="f" style="letter-spacing:0.112px">audio/x-mpeg</span></div><div class="t" style="left:756px">-</div><div class="st" style="left:863px;color:#1a1a1a">☆☆☆☆☆</div></div><div class="row" style="top:779px"><svg style="left:20px;top:1px" width="16" height="16" viewBox="0 0 16 16"><path d="M7 14.4 L15.6 7.8 L15.2 6.6 L6.6 12.6 Z" fill="#8098d0" stroke="#567" stroke-width="0.5"/> <path d="M0.6 7.4 L7 2.4 L15 6.6 L7.4 12.8 Z" fill="url(#gAud)" stroke="#6080c0" stroke-width="0.9" stroke-linejoin="round"/> <path d="M5.6 5.6 L10.8 6.2 M5.8 5.6 L6.4 9.2 M10.6 6.2 L10.2 8.6" stroke="#222" stroke-width="1" fill="none"/> <ellipse cx="6" cy="9.4" rx="1.1" ry="0.8" fill="#111"/><ellipse cx="9.8" cy="8.8" rx="1.1" ry="0.8" fill="#111"/></svg><div class="t" style="left:41px"><span class="f" style="letter-spacing:-0.139px">vv3.0.mp3</span></div><div class="t" style="right:482px"><span class="f" style="letter-spacing:-0.103px">3.82 MiB</span></div><div class="t" style="left:455px"><span class="f" style="letter-spacing:-0.181px">Sep 9, 2010, 4:06 AM</span></div><div class="t" style="left:608px"><span class="f" style="letter-spacing:0.270px">audio/x-riff</span></div><div class="t" style="left:756px">-</div><div class="st" style="left:863px;color:#1a1a1a">☆☆☆☆☆</div></div></div><div style="left:922px;top:54px;width:1px;height:814px;background:#808a80"></div><div style="left:923px;top:54px;width:13px;height:1px;background:#808080"></div><div class="btn" style="left:923px;top:55px;width:13px;height:12px"><svg style="left:2px;top:2px" width="8" height="6"><path d="M1.2 4.6 L4 1.8 L6.8 4.6" stroke="#606060" stroke-width="1.7" fill="none"/></svg></div><div style="left:923px;top:67px;width:13px;height:1px;background:#7c7c7c"></div><div class="sb" style="left:923px;top:68px;width:13px;height:788px;border-top:1px solid #fff;border-left:1px solid #fff"></div><div style="left:923px;top:855px;width:13px;height:1px;background:#7c7c7c"></div><div class="btn" style="left:923px;top:856px;width:13px;height:11px"><svg style="left:2px;top:2px" width="8" height="6"><path d="M1.2 1.4 L4 4.2 L6.8 1.4" stroke="#606060" stroke-width="1.7" fill="none"/></svg></div><div style="left:0;top:868px;width:922px;height:1px;background:#b2baac"></div><div style="left:922px;top:867px;width:14px;height:1px;background:#303030"></div><div style="left:922px;top:867px;width:1px;height:14px;background:#303030"></div><div style="left:0;top:869px;width:183px;height:12px;background:linear-gradient(#cccccc,#b0b0b0);border-top:1px solid #d6d6d6"><div class="t" style="left:3px;top:-1px;font-size:9.5px;line-height:11px"><span class="f" style="letter-spacing:-0.238px">42 items</span></div></div><div style="left:183px;top:869px;width:1px;height:12px;background:#787878"></div><div class="btn" style="left:184px;top:869px;width:12px;height:12px"><svg style="left:2px;top:2px" width="6" height="8"><path d="M4.6 0.8 L1.8 3.5 L4.6 6.2" stroke="#606060" stroke-width="1.7" fill="none"/></svg></div><div style="left:196px;top:869px;width:1px;height:12px;background:#787878"></div><div class="sb" style="left:197px;top:869px;width:712px;height:12px;border-top:1px solid #fff;border-left:1px solid #fff"></div><div style="left:909px;top:869px;width:1px;height:12px;background:#787878"></div><div class="btn" style="left:910px;top:869px;width:12px;height:12px"><svg style="left:3px;top:2px" width="6" height="8"><path d="M1.4 0.8 L4.2 3.5 L1.4 6.2" stroke="#606060" stroke-width="1.7" fill="none"/></svg></div></div></div></div></div></div></div><div style="left:928px;top:873px;width:16px;height:16px;background:linear-gradient(135deg,#a8a8a8 0,#8c8c8c 45%,#505050 100%)"><svg width="16" height="16" shape-rendering="crispEdges" style="left:0;top:0"><rect x="12" y="3" width="1" height="1" fill="#000"/><rect x="13" y="4" width="1" height="1" fill="#fff"/><rect x="9" y="6" width="1" height="1" fill="#000"/><rect x="10" y="7" width="1" height="1" fill="#fff"/><rect x="12" y="6" width="1" height="1" fill="#000"/><rect x="13" y="7" width="1" height="1" fill="#fff"/><rect x="6" y="9" width="1" height="1" fill="#000"/><rect x="7" y="10" width="1" height="1" fill="#fff"/><rect x="9" y="9" width="1" height="1" fill="#000"/><rect x="10" y="10" width="1" height="1" fill="#fff"/><rect x="12" y="9" width="1" height="1" fill="#000"/><rect x="13" y="10" width="1" height="1" fill="#fff"/><rect x="3" y="12" width="1" height="1" fill="#000"/><rect x="4" y="13" width="1" height="1" fill="#fff"/><rect x="6" y="12" width="1" height="1" fill="#000"/><rect x="7" y="13" width="1" height="1" fill="#fff"/><rect x="9" y="12" width="1" height="1" fill="#000"/><rect x="10" y="13" width="1" height="1" fill="#fff"/><rect x="12" y="12" width="1" height="1" fill="#000"/><rect x="13" y="13" width="1" height="1" fill="#fff"/></svg></div></div><div style="left:203px;top:98px;width:288px;height:3px;background:#666"></div><div style="left:202px;top:98px;width:1px;height:3px;background:#b4b4b4"></div>
<div style="left:1175px;top:474px;width:146px;height:25px;background:#9e9e9e;border-top:1px solid #666;border-left:1px solid #666;border-right:1px solid #666"><div style="left:0;top:0;right:0;height:1px;background:#e6e6e6"></div><div style="left:0;top:0;width:1px;bottom:0;background:#e6e6e6"></div></div><div style="left:1180px;top:479px;width:17px;height:17px;background:#5e5e5e"></div><div style="left:1181px;top:480px;width:16px;height:16px;background:#e8e4c6"></div><div style="left:1182px;top:481px;width:14px;height:14px;background:#5a5a5a"></div><div style="left:1182px;top:481px;width:13px;height:13px;background:linear-gradient(135deg,#cecece 0,#c6c6c6 46%,#bebebe 50%,#a2a2a2 56%,#8c8c8c 100%)"></div><div style="left:1301px;top:482px;width:14px;height:14px;background:#5e5e5e"></div><div style="left:1302px;top:483px;width:13px;height:13px;background:#e8e4c6"></div><div style="left:1303px;top:484px;width:11px;height:11px;background:#5a5a5a"></div><div style="left:1303px;top:484px;width:10px;height:10px;background:linear-gradient(135deg,#cecece 0,#c6c6c6 46%,#bebebe 50%,#a2a2a2 56%,#8c8c8c 100%)"></div><div style="left:1298px;top:479px;width:11px;height:11px;background:#5e5e5e"></div><div style="left:1299px;top:480px;width:10px;height:10px;background:#e8e4c6"></div><div style="left:1300px;top:481px;width:8px;height:8px;background:#5a5a5a"></div><div style="left:1300px;top:481px;width:7px;height:7px;background:linear-gradient(135deg,#cecece 0,#c6c6c6 46%,#bebebe 50%,#a2a2a2 56%,#8c8c8c 100%)"></div><div class="t" style="left:1215px;top:481px;font-size:12px;line-height:15px;height:15px;color:#000"><span class="f" style="letter-spacing:-0.158px">TraX-master</span></div><div style="left:1175px;top:498px;width:444px;height:321px"><div class="ring" style="border-color:#5a5a5a #262626 #262626 #6a6a6a"><div class="ring" style="border-color:#e6e6e6 #303030 #303030 #e6e6e6"><div class="ring" style="border-color:#9e9e9e #9e9e9e #9e9e9e #9e9e9e"><div class="ring" style="border-color:#484848 #e6e6e6 #e6e6e6 #484848"><div class="ring" style="border-color:#484848 #484848 #484848 #484848"><div style="left:0;top:0;right:0;bottom:0;background:#b4b4b4;overflow:hidden"><div class="mb"><div class="mi" style="left:7px"><span class="f" style="display:inline-block;transform:scaleX(0.9254);transform-origin:0 0">File</span></div><div class="mi" style="left:41px"><span class="f" style="display:inline-block;transform:scaleX(1.0307);transform-origin:0 0">Window</span></div><div class="mi" style="left:101px"><span class="f" style="display:inline-block;transform:scaleX(1.0354);transform-origin:0 0">Attributes</span></div><svg style="left:416px;top:1.5px" width="16" height="16" viewBox="0 0 32 32"><path d="M22.5 29.5 L31.5 27 L30.5 23.5 L24 24.5 Z" fill="#3c423c" opacity="0.75"/> <path d="M12 3.6 L17.5 3 L19.5 4.2 L31 5.2 L21.6 30.2 L20 14.5 Z" fill="url(#gBk)" stroke="#000" stroke-width="1.1" stroke-linejoin="round"/> <path d="M7.8 4.6 L25.2 10.6 L22.2 28.5 L9 12 Z" fill="url(#gPp)" stroke="#111" stroke-width="0.9" stroke-linejoin="round"/> <path d="M9.2 9.2 L23.2 14.2 L21.6 28.6 L10 14 Z" fill="#fff" stroke="#a04010" stroke-width="0.5"/> <path d="M0.6 6.4 L20 14.6 L21.4 30.2 L5.5 20.5 Z" fill="url(#gFr)" stroke="#000" stroke-width="1.1" stroke-linejoin="round"/></svg></div><div class="nav"><svg style="left:5px;top:4.3px" width="20" height="20" viewBox="0 0 20 20"><path d="M1.3 10.3 L10.3 2.3 V6 H18 V15 H10.3 V19 Z" fill="#8a9688" opacity="0.55"/> <path d="M1 10 L10 2 V5.7 H17.7 V14.7 H10 V18.7 Z" fill="url(#gArr)" stroke="#9ca89c" stroke-width="0.8" stroke-linejoin="round"/></svg><svg style="left:37.3px;top:4.3px" width="20" height="20" viewBox="0 0 20 20"><path d="M19.3 10.3 L10.3 2.3 V6 H2.6 V15 H10.3 V19 Z" fill="#8a9688" opacity="0.55"/> <path d="M19 10 L10 2 V5.7 H2.3 V14.7 H10 V18.7 Z" fill="url(#gArr)" stroke="#9ca89c" stroke-width="0.8" stroke-linejoin="round"/></svg><svg style="left:71px;top:4.8px" width="19" height="19" viewBox="0 0 20 20"><path d="M10.4 1.6 L19 11 H14.9 V18.6 H5.9 V11 H1.8 Z" fill="#6a5a3a" opacity="0.5"/> <path d="M10 1 L18.6 10.4 H14.5 V18 H5.5 V10.4 H1.4 Z" fill="url(#gUp)" stroke="#d07818" stroke-width="0.9" stroke-linejoin="round"/></svg><div class="tf" style="left:99px;top:4px;width:330px;height:21px"><div class="t" style="left:3px;top:4px"><span class="f" style="letter-spacing:0.171px">/boot/home/Downloads/trax/TraX-master</span></div></div></div><div class="hdr" style="width:421px"><div class="hc" style="left:0px;width:29px"></div><div class="hc" style="left:29px;width:150px"><svg style="left:2px;top:5px" width="8" height="5"><path d="M0.3 0.3 H7.3 L3.8 4.2 Z" fill="#404040"/></svg><span class="f" style="left:11px;transform:scaleX(0.8483);transform-origin:0 0">Name</span></div><div class="hc" style="left:179px;width:89px"><span class="f" style="right:5px;transform:scaleX(0.7682);transform-origin:100% 0">Size</span></div><div class="hc" style="left:268px;width:152px"><span class="f" style="left:9px;transform:scaleX(0.9047);transform-origin:0 0">Modified</span></div></div><div class="list" style="width:420px;height:229px"><div class="row" style="top:0px"><svg style="left:20px;top:1px" width="16" height="16" viewBox="0 0 32 32"><path d="M22.5 29.5 L31.5 27 L30.5 23.5 L24 24.5 Z" fill="#3c423c" opacity="0.75"/> <path d="M12 3.6 L17.5 3 L19.5 4.2 L31 5.2 L21.6 30.2 L20 14.5 Z" fill="url(#gBk)" stroke="#000" stroke-width="1.1" stroke-linejoin="round"/> <path d="M7.8 4.6 L25.2 10.6 L22.2 28.5 L9 12 Z" fill="url(#gPp)" stroke="#111" stroke-width="0.9" stroke-linejoin="round"/> <path d="M9.2 9.2 L23.2 14.2 L21.6 28.6 L10 14 Z" fill="#fff" stroke="#a04010" stroke-width="0.5"/> <path d="M0.6 6.4 L20 14.6 L21.4 30.2 L5.5 20.5 Z" fill="url(#gFr)" stroke="#000" stroke-width="1.1" stroke-linejoin="round"/></svg><div class="t" style="left:41px"><span class="f" style="letter-spacing:0.138px">bin</span></div><div class="t" style="right:157px"><span class="f">-</span></div><div class="t" style="left:278px"><span class="f" style="letter-spacing:-0.221px">January 20, 2024 at 3:17 PM</span></div></div><div class="row" style="top:19px"><svg style="left:20px;top:1px" width="16" height="16" viewBox="0 0 32 32"><path d="M22.5 29.5 L31.5 27 L30.5 23.5 L24 24.5 Z" fill="#3c423c" opacity="0.75"/> <path d="M12 3.6 L17.5 3 L19.5 4.2 L31 5.2 L21.6 30.2 L20 14.5 Z" fill="url(#gBk)" stroke="#000" stroke-width="1.1" stroke-linejoin="round"/> <path d="M7.8 4.6 L25.2 10.6 L22.2 28.5 L9 12 Z" fill="url(#gPp)" stroke="#111" stroke-width="0.9" stroke-linejoin="round"/> <path d="M9.2 9.2 L23.2 14.2 L21.6 28.6 L10 14 Z" fill="#fff" stroke="#a04010" stroke-width="0.5"/> <path d="M0.6 6.4 L20 14.6 L21.4 30.2 L5.5 20.5 Z" fill="url(#gFr)" stroke="#000" stroke-width="1.1" stroke-linejoin="round"/></svg><div class="t" style="left:41px"><span class="f" style="letter-spacing:0.062px">Common</span></div><div class="t" style="right:157px"><span class="f">-</span></div><div class="t" style="left:278px"><span class="f" style="letter-spacing:-0.221px">January 20, 2024 at 3:17 PM</span></div></div><div class="row" style="top:38px"><svg style="left:20px;top:1px" width="16" height="16" viewBox="0 0 32 32"><path d="M22.5 29.5 L31.5 27 L30.5 23.5 L24 24.5 Z" fill="#3c423c" opacity="0.75"/> <path d="M12 3.6 L17.5 3 L19.5 4.2 L31 5.2 L21.6 30.2 L20 14.5 Z" fill="url(#gBk)" stroke="#000" stroke-width="1.1" stroke-linejoin="round"/> <path d="M7.8 4.6 L25.2 10.6 L22.2 28.5 L9 12 Z" fill="url(#gPp)" stroke="#111" stroke-width="0.9" stroke-linejoin="round"/> <path d="M9.2 9.2 L23.2 14.2 L21.6 28.6 L10 14 Z" fill="#fff" stroke="#a04010" stroke-width="0.5"/> <path d="M0.6 6.4 L20 14.6 L21.4 30.2 L5.5 20.5 Z" fill="url(#gFr)" stroke="#000" stroke-width="1.1" stroke-linejoin="round"/></svg><div class="t" style="left:41px"><span class="f" style="letter-spacing:-0.341px">Docs</span></div><div class="t" style="right:157px"><span class="f">-</span></div><div class="t" style="left:278px"><span class="f" style="letter-spacing:-0.221px">January 20, 2024 at 3:17 PM</span></div></div><div class="row" style="top:57px"><svg style="left:20px;top:1px" width="16" height="16" viewBox="0 0 32 32"><path d="M22.5 29.5 L31.5 27 L30.5 23.5 L24 24.5 Z" fill="#3c423c" opacity="0.75"/> <path d="M12 3.6 L17.5 3 L19.5 4.2 L31 5.2 L21.6 30.2 L20 14.5 Z" fill="url(#gBk)" stroke="#000" stroke-width="1.1" stroke-linejoin="round"/> <path d="M7.8 4.6 L25.2 10.6 L22.2 28.5 L9 12 Z" fill="url(#gPp)" stroke="#111" stroke-width="0.9" stroke-linejoin="round"/> <path d="M9.2 9.2 L23.2 14.2 L21.6 28.6 L10 14 Z" fill="#fff" stroke="#a04010" stroke-width="0.5"/> <path d="M0.6 6.4 L20 14.6 L21.4 30.2 L5.5 20.5 Z" fill="url(#gFr)" stroke="#000" stroke-width="1.1" stroke-linejoin="round"/></svg><div class="t" style="left:41px"><span class="f" style="letter-spacing:-0.029px">etc</span></div><div class="t" style="right:157px"><span class="f">-</span></div><div class="t" style="left:278px"><span class="f" style="letter-spacing:-0.221px">January 20, 2024 at 3:17 PM</span></div></div><div class="row" style="top:76px"><svg style="left:20px;top:1px" width="16" height="16" viewBox="0 0 32 32"><path d="M22.5 29.5 L31.5 27 L30.5 23.5 L24 24.5 Z" fill="#3c423c" opacity="0.75"/> <path d="M12 3.6 L17.5 3 L19.5 4.2 L31 5.2 L21.6 30.2 L20 14.5 Z" fill="url(#gBk)" stroke="#000" stroke-width="1.1" stroke-linejoin="round"/> <path d="M7.8 4.6 L25.2 10.6 L22.2 28.5 L9 12 Z" fill="url(#gPp)" stroke="#111" stroke-width="0.9" stroke-linejoin="round"/> <path d="M9.2 9.2 L23.2 14.2 L21.6 28.6 L10 14 Z" fill="#fff" stroke="#a04010" stroke-width="0.5"/> <path d="M0.6 6.4 L20 14.6 L21.4 30.2 L5.5 20.5 Z" fill="url(#gFr)" stroke="#000" stroke-width="1.1" stroke-linejoin="round"/></svg><div class="t" style="left:41px"><span class="f" style="letter-spacing:-0.225px">FastTrax</span></div><div class="t" style="right:157px"><span class="f">-</span></div><div class="t" style="left:278px"><span class="f" style="letter-spacing:-0.221px">January 20, 2024 at 3:17 PM</span></div></div><div class="row" style="top:95px"><svg style="left:20px;top:1px" width="16" height="16" viewBox="0 0 32 32"><path d="M22.5 29.5 L31.5 27 L30.5 23.5 L24 24.5 Z" fill="#3c423c" opacity="0.75"/> <path d="M12 3.6 L17.5 3 L19.5 4.2 L31 5.2 L21.6 30.2 L20 14.5 Z" fill="url(#gBk)" stroke="#000" stroke-width="1.1" stroke-linejoin="round"/> <path d="M7.8 4.6 L25.2 10.6 L22.2 28.5 L9 12 Z" fill="url(#gPp)" stroke="#111" stroke-width="0.9" stroke-linejoin="round"/> <path d="M9.2 9.2 L23.2 14.2 L21.6 28.6 L10 14 Z" fill="#fff" stroke="#a04010" stroke-width="0.5"/> <path d="M0.6 6.4 L20 14.6 L21.4 30.2 L5.5 20.5 Z" fill="url(#gFr)" stroke="#000" stroke-width="1.1" stroke-linejoin="round"/></svg><div class="t" style="left:41px"><span class="f" style="letter-spacing:-0.297px">FindLib</span></div><div class="t" style="right:157px"><span class="f">-</span></div><div class="t" style="left:278px"><span class="f" style="letter-spacing:-0.221px">January 20, 2024 at 3:17 PM</span></div></div><div class="row" style="top:114px"><svg style="left:20px;top:1px" width="16" height="16" viewBox="0 0 32 32"><path d="M22.5 29.5 L31.5 27 L30.5 23.5 L24 24.5 Z" fill="#3c423c" opacity="0.75"/> <path d="M12 3.6 L17.5 3 L19.5 4.2 L31 5.2 L21.6 30.2 L20 14.5 Z" fill="url(#gBk)" stroke="#000" stroke-width="1.1" stroke-linejoin="round"/> <path d="M7.8 4.6 L25.2 10.6 L22.2 28.5 L9 12 Z" fill="url(#gPp)" stroke="#111" stroke-width="0.9" stroke-linejoin="round"/> <path d="M9.2 9.2 L23.2 14.2 L21.6 28.6 L10 14 Z" fill="#fff" stroke="#a04010" stroke-width="0.5"/> <path d="M0.6 6.4 L20 14.6 L21.4 30.2 L5.5 20.5 Z" fill="url(#gFr)" stroke="#000" stroke-width="1.1" stroke-linejoin="round"/></svg><div class="t" style="left:41px"><span class="f" style="letter-spacing:-0.600px">FRegex</span></div><div class="t" style="right:157px"><span class="f">-</span></div><div class="t" style="left:278px"><span class="f" style="letter-spacing:-0.221px">January 20, 2024 at 3:17 PM</span></div></div><div class="row" style="top:133px"><svg style="left:20px;top:1px" width="16" height="16" viewBox="0 0 32 32"><path d="M22.5 29.5 L31.5 27 L30.5 23.5 L24 24.5 Z" fill="#3c423c" opacity="0.75"/> <path d="M12 3.6 L17.5 3 L19.5 4.2 L31 5.2 L21.6 30.2 L20 14.5 Z" fill="url(#gBk)" stroke="#000" stroke-width="1.1" stroke-linejoin="round"/> <path d="M7.8 4.6 L25.2 10.6 L22.2 28.5 L9 12 Z" fill="url(#gPp)" stroke="#111" stroke-width="0.9" stroke-linejoin="round"/> <path d="M9.2 9.2 L23.2 14.2 L21.6 28.6 L10 14 Z" fill="#fff" stroke="#a04010" stroke-width="0.5"/> <path d="M0.6 6.4 L20 14.6 L21.4 30.2 L5.5 20.5 Z" fill="url(#gFr)" stroke="#000" stroke-width="1.1" stroke-linejoin="round"/></svg><div class="t" style="left:41px"><span class="f" style="letter-spacing:-0.205px">TraxSource</span></div><div class="t" style="right:157px"><span class="f">-</span></div><div class="t" style="left:278px"><span class="f" style="letter-spacing:-0.221px">January 20, 2024 at 3:17 PM</span></div></div><div class="row" style="top:152px"><svg style="left:20px;top:1px" width="16" height="16" viewBox="0 0 16 16"><path d="M7 14.4 L15.6 7.8 L15.2 6.6 L6.6 12.6 Z" fill="#7878b8" stroke="#222" stroke-width="0.5"/> <path d="M0.6 7.4 L7 2.4 L15 6.6 L7.4 12.8 Z" fill="url(#gBlu)" stroke="#1a1a2a" stroke-width="0.9" stroke-linejoin="round"/></svg><div class="t" style="left:41px"><span class="f" style="letter-spacing:-0.468px">FastTraX.PNG</span></div><div class="t" style="right:157px"><span class="f" style="letter-spacing:-0.249px">8.42 KiB</span></div><div class="t" style="left:278px"><span class="f" style="letter-spacing:-0.215px">Dec 17, 2018, 4:32 PM</span></div></div><div class="row" style="top:171px"><svg style="left:20px;top:1px" width="16" height="16" viewBox="0 0 16 16"><path d="M7 14.4 L15.6 7.8 L15.2 6.6 L6.6 12.6 Z" fill="#c8a838" stroke="#222" stroke-width="0.5"/> <path d="M0.6 7.4 L7 2.4 L15 6.6 L7.4 12.8 Z" fill="url(#gYel)" stroke="#2a2a10" stroke-width="0.9" stroke-linejoin="round"/> <path d="M4 6.6 L9.6 10 M5.6 5.4 L11.2 8.6 M7.2 4.2 L12.6 7.4 M5 8.2 L9 4.8 M7 9.4 L11 5.8" stroke="#9a9260" stroke-width="0.5" fill="none"/></svg><div class="t" style="left:41px"><span class="f" style="letter-spacing:0.329px">makefile</span></div><div class="t" style="right:157px"><span class="f" style="letter-spacing:-0.134px">167 bytes</span></div><div class="t" style="left:278px"><span class="f" style="letter-spacing:-0.215px">Dec 17, 2018, 4:32 PM</span></div></div><div class="row" style="top:190px"><svg style="left:20px;top:1px" width="16" height="16" viewBox="0 0 16 16"><path d="M7 14.4 L15.6 7.8 L15.2 6.6 L6.6 12.6 Z" fill="#c8a838" stroke="#222" stroke-width="0.5"/> <path d="M0.6 7.4 L7 2.4 L15 6.6 L7.4 12.8 Z" fill="url(#gYel)" stroke="#2a2a10" stroke-width="0.9" stroke-linejoin="round"/> <path d="M4 6.6 L9.6 10 M5.6 5.4 L11.2 8.6 M7.2 4.2 L12.6 7.4 M5 8.2 L9 4.8 M7 9.4 L11 5.8" stroke="#9a9260" stroke-width="0.5" fill="none"/></svg><div class="t" style="left:41px"><span class="f" style="letter-spacing:-0.512px">README.md</span></div><div class="t" style="right:157px"><span class="f" style="letter-spacing:-0.299px">1.49 KiB</span></div><div class="t" style="left:278px"><span class="f" style="letter-spacing:-0.215px">Dec 17, 2018, 4:32 PM</span></div></div><div class="row" style="top:209px"><svg style="left:20px;top:1px" width="16" height="16" viewBox="0 1 16 16"><rect x="0" y="6" width="16" height="8" fill="#dcdcdc"/> <rect x="0" y="6" width="16" height="2" fill="#b4b4b4"/> <rect x="2" y="8" width="12" height="1" fill="#fafafa"/> <rect x="2" y="8" width="1" height="1" fill="#888"/><rect x="13" y="8" width="1" height="1" fill="#888"/> <rect x="0" y="5" width="3" height="1" fill="#f4c830"/> <rect x="1" y="11" width="2" height="1" fill="#c4c4c4"/><rect x="13" y="11" width="2" height="1" fill="#c0c0c0"/></svg><div class="t" style="left:41px"><span class="f" style="letter-spacing:-0.243px">TraX.png</span></div><div class="t" style="right:157px"><span class="f" style="letter-spacing:-0.245px">10.32 KiB</span></div><div class="t" style="left:278px"><span class="f" style="letter-spacing:-0.215px">Dec 17, 2018, 4:32 PM</span></div></div></div><div style="left:420px;top:54px;width:1px;height:244px;background:#808a80"></div><div style="left:421px;top:54px;width:13px;height:1px;background:#808080"></div><div class="btn" style="left:421px;top:55px;width:13px;height:12px"><svg style="left:2px;top:2px" width="8" height="6"><path d="M1.2 4.6 L4 1.8 L6.8 4.6" stroke="#606060" stroke-width="1.7" fill="none"/></svg></div><div style="left:421px;top:67px;width:13px;height:1px;background:#7c7c7c"></div><div class="sb" style="left:421px;top:68px;width:13px;height:218px;border-top:1px solid #fff;border-left:1px solid #fff"></div><div style="left:421px;top:285px;width:13px;height:1px;background:#7c7c7c"></div><div class="btn" style="left:421px;top:286px;width:13px;height:11px"><svg style="left:2px;top:2px" width="8" height="6"><path d="M1.2 1.4 L4 4.2 L6.8 1.4" stroke="#606060" stroke-width="1.7" fill="none"/></svg></div><div style="left:0;top:298px;width:420px;height:1px;background:#b2baac"></div><div style="left:420px;top:297px;width:14px;height:1px;background:#303030"></div><div style="left:420px;top:297px;width:1px;height:14px;background:#303030"></div><div style="left:0;top:299px;width:83px;height:12px;background:linear-gradient(#cccccc,#b0b0b0);border-top:1px solid #d6d6d6"><div class="t" style="left:3px;top:-1px;font-size:9.5px;line-height:11px"><span class="f" style="letter-spacing:-0.238px">12 items</span></div></div><div style="left:83px;top:299px;width:1px;height:12px;background:#787878"></div><div class="btn" style="left:84px;top:299px;width:12px;height:12px"><svg style="left:2px;top:2px" width="6" height="8"><path d="M4.6 0.8 L1.8 3.5 L4.6 6.2" stroke="#606060" stroke-width="1.7" fill="none"/></svg></div><div style="left:96px;top:299px;width:1px;height:12px;background:#787878"></div><div class="sb" style="left:97px;top:299px;width:310px;height:12px;border-top:1px solid #fff;border-left:1px solid #fff"></div><div style="left:407px;top:299px;width:1px;height:12px;background:#787878"></div><div class="btn" style="left:408px;top:299px;width:12px;height:12px"><svg style="left:3px;top:2px" width="6" height="8"><path d="M1.4 0.8 L4.2 3.5 L1.4 6.2" stroke="#606060" stroke-width="1.7" fill="none"/></svg></div></div></div></div></div></div></div><div style="left:426px;top:303px;width:16px;height:16px;background:linear-gradient(135deg,#ffffff 0,#d8d8d8 45%,#8c8c8c 100%)"></div></div><div style="left:1177px;top:498px;width:143px;height:3px;background:#9e9e9e"></div><div style="left:1176px;top:498px;width:1px;height:3px;background:#e6e6e6"></div>
</body></html>
